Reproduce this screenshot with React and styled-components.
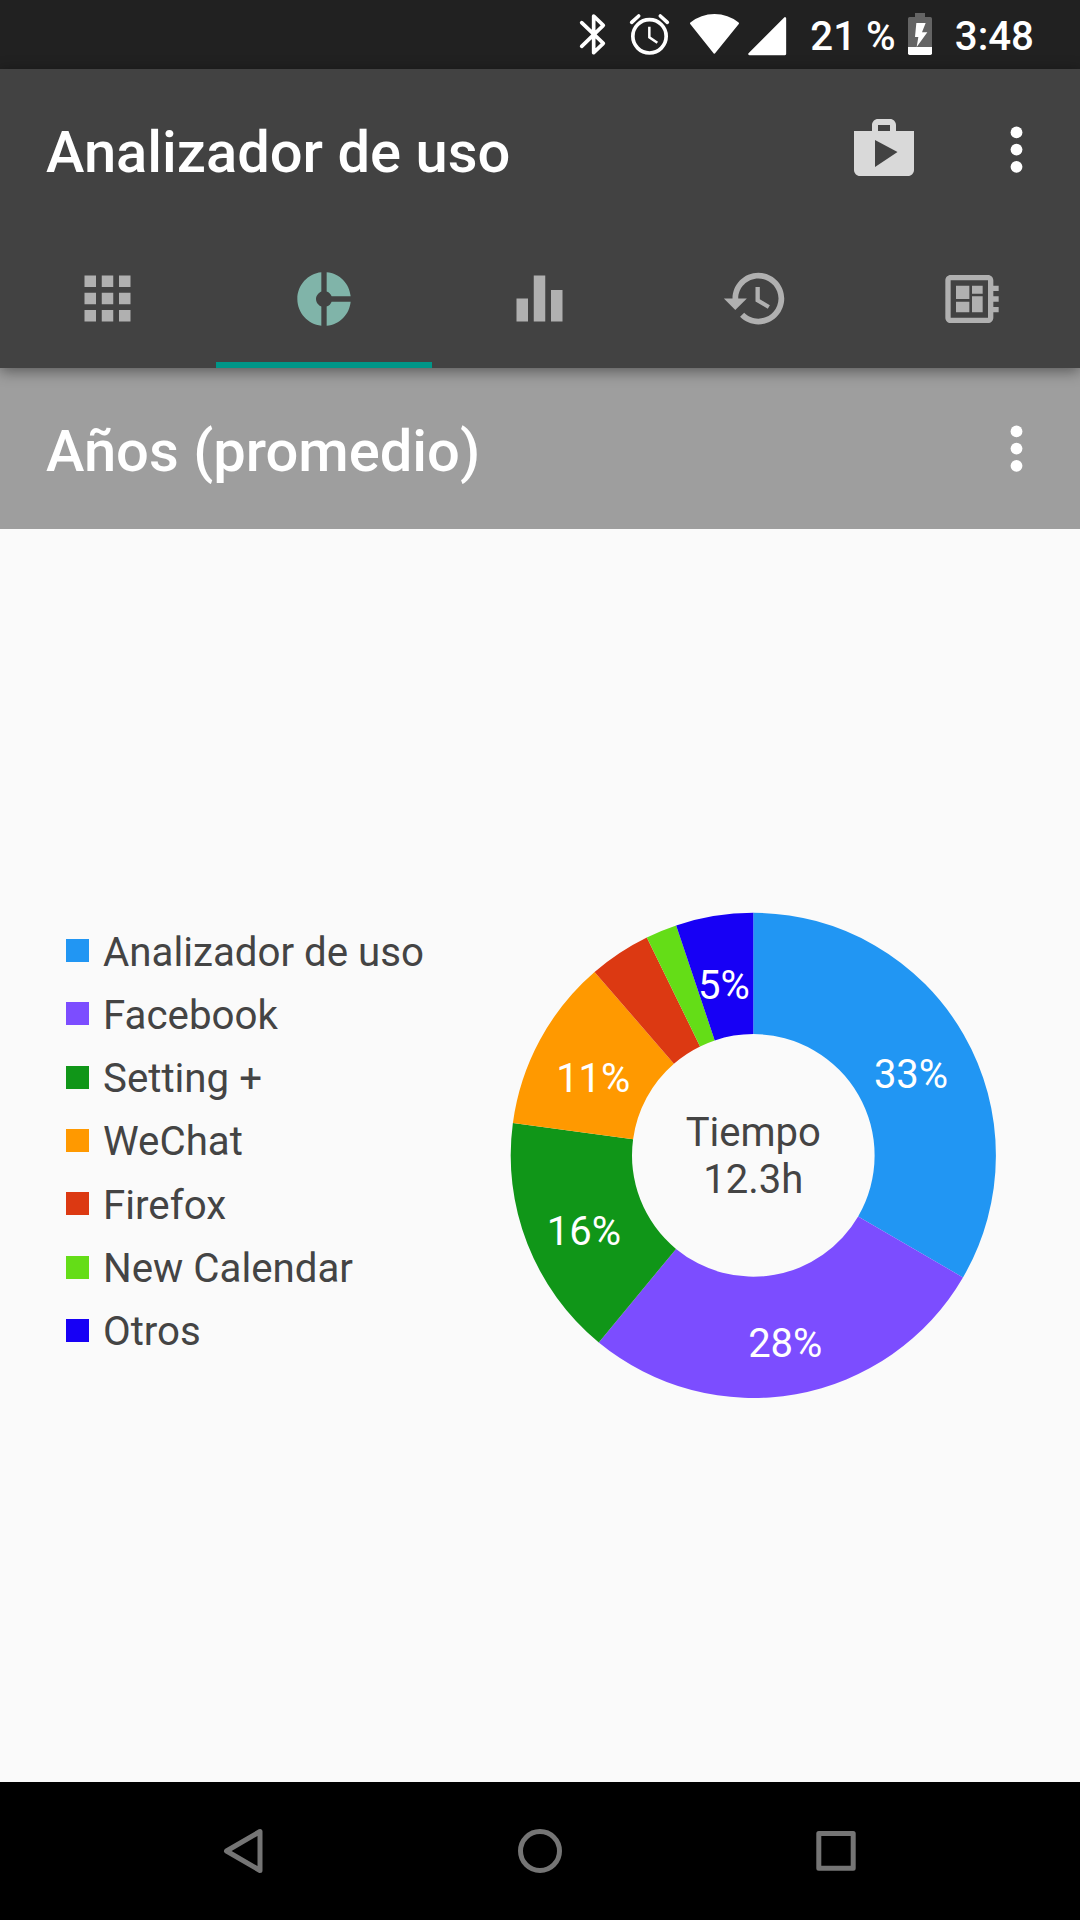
import React, { useState } from "react";
import styled, { createGlobalStyle } from "styled-components";

const GlobalStyle = createGlobalStyle`
  body {
    margin: 0;
    background: #fafafa;
    font-family: Roboto, "Liberation Sans", sans-serif;
  }
`;

const Screen = styled.div`
  display: flex;
  flex-direction: column;
  width: 1080px;
  height: 1920px;
  overflow: hidden;
`;

const StatusBar = styled.header`
  display: flex;
  align-items: center;
  justify-content: flex-end;
  box-sizing: border-box;
  height: 69px;
  padding-right: 46px;
  background: #212121;
  color: #fff;
`;

const StatusIcon = styled.svg`
  flex: none;
  width: ${(props) => props.$width}px;
  height: 45px;
  margin-right: ${(props) => props.$gap}px;
`;

const StatusText = styled.span`
  padding-top: 4px;
  margin-right: ${(props) => props.$gap || 0}px;
  font-size: 40.25px;
  font-weight: 500;
  line-height: 48px;
  white-space: pre;
`;

const AppBar = styled.div`
  position: relative;
  z-index: 1;
  background: #424242;
  box-shadow: 0 3px 14px rgba(0, 0, 0, 0.45);
`;

const Toolbar = styled.div`
  display: flex;
  align-items: center;
  box-sizing: border-box;
  height: 161px;
  padding: 0 46px;
  background: ${(props) => props.$background || "transparent"};
`;

const Title = styled.h1`
  flex: 1;
  margin: 0;
  padding-top: 4px;
  color: #fff;
  font-size: 57.9px;
  font-weight: 500;
  line-height: 68px;
`;

const IconButton = styled.button`
  display: flex;
  padding: 0;
  margin-left: ${(props) => props.$gap || 0}px;
  border: 0;
  background: none;
  color: #fff;
`;

const StoreButton = styled(IconButton)`
  padding-bottom: 1px;
  color: #d9d9d9;
`;

const TabRow = styled.nav`
  display: flex;
  height: 138px;
`;

const Tab = styled.button`
  display: flex;
  flex: 1;
  align-items: center;
  justify-content: center;
  box-sizing: border-box;
  padding: 5px 1px 0 0;
  border: 0;
  border-bottom: 6px solid
    ${(props) => (props.$active ? "#009688" : "transparent")};
  background: none;
  color: ${(props) => (props.$active ? "#80b4a9" : "#b0b0b0")};
`;

const ChartArea = styled.main`
  display: flex;
  flex: 1;
  align-items: center;
  padding-left: 66px;
  background: #fafafa;
`;

const Legend = styled.ul`
  width: 443px;
  margin: 0;
  padding: 0 0 30px;
  list-style: none;
`;

const LegendItem = styled.li`
  display: flex;
  align-items: center;
  height: 63.3px;
  color: #444;
  font-size: 40.25px;
`;

const Swatch = styled.span`
  width: 23px;
  height: 23px;
  margin-right: 14px;
  background: ${(props) => props.$color};
`;

const LegendLabel = styled.span`
  padding-top: 4px;
  line-height: 48px;
`;

const Chart = styled.svg`
  flex: none;
  width: 488px;
  height: 488px;
  font-size: 40px;
  text-anchor: middle;
`;

const NavBar = styled.footer`
  display: flex;
  justify-content: center;
  height: 138px;
  background: #000;
`;

const NavButton = styled.button`
  display: flex;
  align-items: center;
  justify-content: center;
  width: 296px;
  padding: 0;
  border: 0;
  background: none;
`;

const tabs = [
  {
    name: "Apps",
    size: 69,
    path: "M4 8h4V4H4v4zm6 12h4v-4h-4v4zm-6 0h4v-4H4v4zm0-6h4v-4H4v4zm6 0h4v-4h-4v4zm6-10v4h4V4h-4zm-6 4h4V4h-4v4zm6 6h4v-4h-4v4zm0 6h4v-4h-4v4z",
  },
  {
    name: "Uso",
    size: 64,
    path: "M11 9.16V2c-5 .5-9 4.79-9 10s4 9.5 9 10v-7.16c-1-.41-2-1.52-2-2.84s1-2.43 2-2.84zM14.86 11H22c-.48-4.75-4-8.53-9-9v7.16c1 .3 1.52.98 1.86 1.84zM13 14.84V22c5-.47 8.52-4.25 9-9h-7.14c-.34.86-.86 1.54-1.86 1.84z",
  },
  {
    name: "Barras",
    size: 69,
    path: "M10 20h4V4h-4v16zm-6 0h4v-8H4v8zM16 9v11h4V9h-4z",
  },
  {
    name: "Historial",
    size: 69,
    path: "M13 3c-4.97 0-9 4.03-9 9H1l3.89 3.89.07.14L9 12H6c0-3.87 3.13-7 7-7s7 3.13 7 7-3.13 7-7 7c-1.93 0-3.68-.79-4.94-2.06l-1.42 1.42C8.27 19.99 10.51 21 13 21c4.97 0 9-4.03 9-9s-4.03-9-9-9zm-1 5v5l4.28 2.54.72-1.21-3.5-2.08V8H12z",
  },
  {
    name: "Sistema",
    size: 64,
    path: "M22 9V7h-2V5c0-1.1-.9-2-2-2H4c-1.1 0-2 .9-2 2v14c0 1.1.9 2 2 2h14c1.1 0 2-.9 2-2v-2h2v-2h-2v-2h2v-2h-2V9h2zm-4 10H4V5h14v14zM6 13h5v4H6zm6-6h4v3h-4zM6 7h5v5H6zm6 4h4v6h-4z",
  },
];

// angle is the sweep of the slice in degrees
const apps = [
  { name: "Analizador de uso", color: "#2196f3", angle: 120.2, label: "33%" },
  { name: "Facebook", color: "#7c4dff", angle: 99.36, label: "28%" },
  { name: "Setting +", color: "#109618", angle: 58.14, label: "16%" },
  { name: "WeChat", color: "#ff9900", angle: 41.43, label: "11%" },
  { name: "Firefox", color: "#dc3912", angle: 14.84 },
  { name: "New Calendar", color: "#64dd17", angle: 7.49 },
  { name: "Otros", color: "#1700f5", angle: 18.54, label: "5%" },
];

const OUTER = 242.6;
const INNER = 121.3;

const point = (radius, degrees) => {
  const rad = (degrees * Math.PI) / 180;
  return [radius * Math.sin(rad), -radius * Math.cos(rad)];
};

const slicePath = (start, end) => {
  const large = end - start > 180 ? 1 : 0;
  return [
    `M${point(OUTER, start)}`,
    `A${OUTER} ${OUTER} 0 ${large} 1 ${point(OUTER, end)}`,
    `L${point(INNER, end)}`,
    `A${INNER} ${INNER} 0 ${large} 0 ${point(INNER, start)}Z`,
  ].join(" ");
};

const slices = apps.map((app, index) => {
  const start = apps.slice(0, index).reduce((sum, a) => sum + a.angle, 0);
  const end = start + app.angle;
  const [x, y] = point(OUTER * 0.75, (start + end) / 2);
  return { ...app, path: slicePath(start, end), x, y: y + 22.9 };
});

const MaterialIcon = ({ size, path }) => (
  <svg width={size} height={size} viewBox="0 0 24 24" fill="currentColor">
    <path d={path} />
  </svg>
);

const MoreIcon = () => (
  <svg width="36" height="60" viewBox="0 0 36 60" fill="currentColor">
    <circle cx="18.5" cy="12.4" r="5.9" />
    <circle cx="18.5" cy="29.6" r="5.9" />
    <circle cx="18.5" cy="46.8" r="5.9" />
  </svg>
);

const StatusIcons = () => (
  <>
    <StatusIcon $width={30} $gap={20} viewBox="51 36 90 135">
      <path
        d="M62 68L127 130L98 158V48L127 76L62 139"
        fill="none"
        stroke="#fff"
        strokeWidth="11"
        strokeLinecap="round"
        strokeLinejoin="round"
      />
    </StatusIcon>
    <StatusIcon $width={44} $gap={16} viewBox="204 36 132 135">
      <g fill="none" stroke="#fff" strokeWidth="11">
        <circle cx="268.5" cy="109" r="50" />
        <path d="M215 67L236 48M322 67L301 48" strokeLinecap="round" />
        <path d="M268 80V112L292 128" strokeWidth="7.5" />
      </g>
    </StatusIcon>
    <StatusIcon $width={53} $gap={5} viewBox="384 36 159 135">
      <path
        d="M393 70A112 112 0 0 1 534 70L463 158Z"
        fill="#fff"
        stroke="#fff"
        strokeWidth="6"
        strokeLinejoin="round"
      />
    </StatusIcon>
    <StatusIcon $width={41} $gap={23} viewBox="558 36 123 135">
      <path
        d="M675 55V162H568Z"
        fill="#fff"
        stroke="#fff"
        strokeWidth="7"
        strokeLinejoin="round"
      />
    </StatusIcon>
  </>
);

const BatteryIcon = () => (
  <StatusIcon $width={24} $gap={23} viewBox="324 36 72 135">
    <path d="M345 39H375V51H391Q396 51 396 56V141H324V56Q324 51 329 51H345Z" fill="#646464" />
    <path d="M324 141H396V160Q396 165 391 165H329Q324 165 324 160Z" fill="#fff" />
    <path d="M349 69H377L366 97H382L350 141L355 111H345Z" fill="#fff" />
  </StatusIcon>
);

const UsageChart = () => (
  <Chart viewBox="-244.3 -243.4 488 488">
    {slices.map((slice) => (
      <path key={slice.name} d={slice.path} fill={slice.color} />
    ))}
    {slices
      .filter((slice) => slice.label)
      .map((slice) => (
        <text key={slice.name} x={slice.x} y={slice.y} fill="#fff">
          {slice.label}
        </text>
      ))}
    <text y="-9.6" fill="#444">
      Tiempo
    </text>
    <text y="37.4" fill="#444">
      12.3h
    </text>
  </Chart>
);

const App = () => {
  const [activeTab, setActiveTab] = useState("Uso");

  return (
    <Screen>
      <GlobalStyle />
      <StatusBar>
        <StatusIcons />
        <StatusText $gap={12}>21 %</StatusText>
        <BatteryIcon />
        <StatusText>3:48</StatusText>
      </StatusBar>
      <AppBar>
        <Toolbar>
          <Title>Analizador de uso</Title>
          <StoreButton>
            <MaterialIcon
              size={72}
              path="M16 6V4c0-1.11-.89-2-2-2h-4c-1.11 0-2 .89-2 2v2H2v13c0 1.11.89 2 2 2h16c1.11 0 2-.89 2-2V6h-6zm-6-2h4v2h-4V4zM9 18V9l7.5 4L9 18z"
            />
          </StoreButton>
          <IconButton $gap={78}>
            <MoreIcon />
          </IconButton>
        </Toolbar>
        <TabRow>
          {tabs.map((tab) => (
            <Tab
              key={tab.name}
              $active={tab.name === activeTab}
              onClick={() => setActiveTab(tab.name)}
            >
              <MaterialIcon size={tab.size} path={tab.path} />
            </Tab>
          ))}
        </TabRow>
      </AppBar>
      <Toolbar $background="#9e9e9e">
        <Title>Años (promedio)</Title>
        <IconButton>
          <MoreIcon />
        </IconButton>
      </Toolbar>
      <ChartArea>
        <Legend>
          {apps.map((app) => (
            <LegendItem key={app.name}>
              <Swatch $color={app.color} />
              <LegendLabel>{app.name}</LegendLabel>
            </LegendItem>
          ))}
        </Legend>
        <UsageChart />
      </ChartArea>
      <NavBar>
        <NavButton>
          <svg width="48" height="48" viewBox="0 0 48 48" fill="none" stroke="#757575" strokeWidth="5" strokeLinejoin="round">
            <path d="M40 4.5V43.5L6.5 24Z" />
          </svg>
        </NavButton>
        <NavButton>
          <svg width="48" height="48" viewBox="0 0 48 48" fill="none" stroke="#757575" strokeWidth="5">
            <circle cx="24" cy="24" r="19.5" />
          </svg>
        </NavButton>
        <NavButton>
          <svg width="48" height="48" viewBox="0 0 48 48" fill="none" stroke="#757575" strokeWidth="5" strokeLinejoin="round">
            <rect x="6.8" y="6.5" width="34.4" height="34.8" />
          </svg>
        </NavButton>
      </NavBar>
    </Screen>
  );
};

export default App;
